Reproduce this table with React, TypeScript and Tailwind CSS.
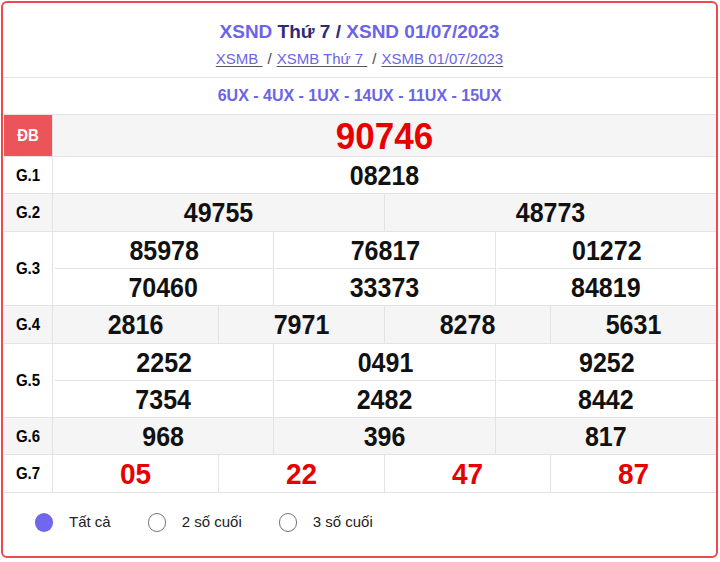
import React from "react";

const gray = "bg-[#f5f5f5]";

function Label({ text, red }: { text: string; red?: boolean }) {
  return (
    <div
      className={
        "w-[49px] shrink-0 flex items-center justify-center border-r border-[#e3e3e3] text-[15px] font-bold " +
        (red ? "bg-[#eb5459] text-white" : "text-black")
      }
    >
      <span className="inline-block scale-y-[1.12]">{text}</span>
    </div>
  );
}

function Row({
  label,
  cols,
  bg,
  h,
  red,
  size,
  lines = 1,
}: {
  label: string;
  cols: string[][];
  bg?: boolean;
  h: string;
  red?: boolean;
  size: string;
  lines?: number;
}) {
  return (
    <div className={"flex border-b border-[#e3e3e3] " + h + " " + (bg ? gray : "bg-white")}>
      <Label text={label} />
      <div className="flex flex-1">
        {cols.map((c, i) => (
          <div
            key={i}
            className={
              "flex-1 flex flex-col " + (i > 0 ? "border-l border-[#e3e3e3]" : "")
            }
          >
            {c.map((n, j) => (
              <div
                key={j}
                className={
                  "flex-1 flex items-center justify-center font-bold leading-none " +
                  size +
                  " " +
                  (red ? "text-[#e60000]" : "text-[#111]") +
                  " " +
                  (lines > 1 && j === 0 ? "border-b border-[#e3e3e3] ml-[2px]" : "")
                }
              >
                <span className="inline-block scale-y-[1.08]">{n}</span>
              </div>
            ))}
          </div>
        ))}
      </div>
    </div>
  );
}

function Radio({ on, text }: { on?: boolean; text: string }) {
  return (
    <div className="flex items-center gap-[16px]">
      {on ? (
        <span className="w-[18px] h-[19px] rounded-full bg-[#7167ef]" />
      ) : (
        <span className="w-[18px] h-[19px] rounded-full border border-[#767676] bg-white" />
      )}
      <span className="text-[15px] text-[#222]">{text}</span>
    </div>
  );
}

export default function App() {
  const num = "text-[25px]";
  return (
    <div className="w-[720px] h-[562px] bg-white pt-px pl-px" style={{ fontFamily: '"Liberation Sans", Arial, sans-serif' }}>
      <div className="w-[717px] h-[557px] border-2 border-[#f0484f] rounded-[6px] overflow-hidden flex flex-col">
        <div className="h-[75px] border-b border-[#e3e3e3] flex flex-col items-center">
          <div className="mt-[18px] text-[19px] font-bold leading-[22px]">
            <span className="text-[#6c64e6]">XSND</span>
            <span className="text-[#2e2b75]"> Thứ 7 / </span>
            <span className="text-[#6c64e6]">XSND 01/07/2023</span>
          </div>
          <div className="mt-[7px] text-[15px] leading-[17px] text-[#444] flex">
            <span className="text-[#6c64e6] underline decoration-[#555] underline-offset-2 whitespace-pre">XSMB </span>
            <span className="px-[5px]">/</span>
            <span className="text-[#6c64e6] underline decoration-[#555] underline-offset-2 whitespace-pre">XSMB Thứ 7 </span>
            <span className="px-[5px]">/</span>
            <span className="text-[#6c64e6] underline decoration-[#555] underline-offset-2">XSMB 01/07/2023</span>
          </div>
        </div>
        <div className="h-[37px] border-b border-[#e3e3e3] flex items-center justify-center text-[16px] font-bold text-[#6c64e6]">
          6UX - 4UX - 1UX - 14UX - 11UX - 15UX
        </div>
        <div className="ml-px flex flex-col">
          <div className={"flex border-b border-[#e3e3e3] h-[42px] " + gray}>
            <Label text="ĐB" red />
            <div className="flex-1 flex items-center justify-center text-[35px] font-bold text-[#e60000] leading-none">
              <span className="inline-block scale-y-[1.08]">90746</span>
            </div>
          </div>
          <Row label="G.1" h="h-[37px]" size={num} cols={[["08218"]]} />
          <Row label="G.2" h="h-[38px]" bg size={num} cols={[["49755"], ["48773"]]} />
          <Row
            label="G.3"
            h="h-[74px]"
            size={num}
            lines={2}
            cols={[
              ["85978", "70460"],
              ["76817", "33373"],
              ["01272", "84819"],
            ]}
          />
          <Row label="G.4" h="h-[38px]" bg size={num} cols={[["2816"], ["7971"], ["8278"], ["5631"]]} />
          <Row
            label="G.5"
            h="h-[74px]"
            size={num}
            lines={2}
            cols={[
              ["2252", "7354"],
              ["0491", "2482"],
              ["9252", "8442"],
            ]}
          />
          <Row label="G.6" h="h-[37px]" bg size={num} cols={[["968"], ["396"], ["817"]]} />
          <Row label="G.7" h="h-[38px]" red size="text-[28px]" cols={[["05"], ["22"], ["47"], ["87"]]} />
        </div>
        <div className="flex-1 flex items-center pl-[32px] gap-[37px] pb-[4px]">
          <Radio on text="Tất cả" />
          <Radio text="2 số cuối" />
          <Radio text="3 số cuối" />
        </div>
      </div>
    </div>
  );
}
